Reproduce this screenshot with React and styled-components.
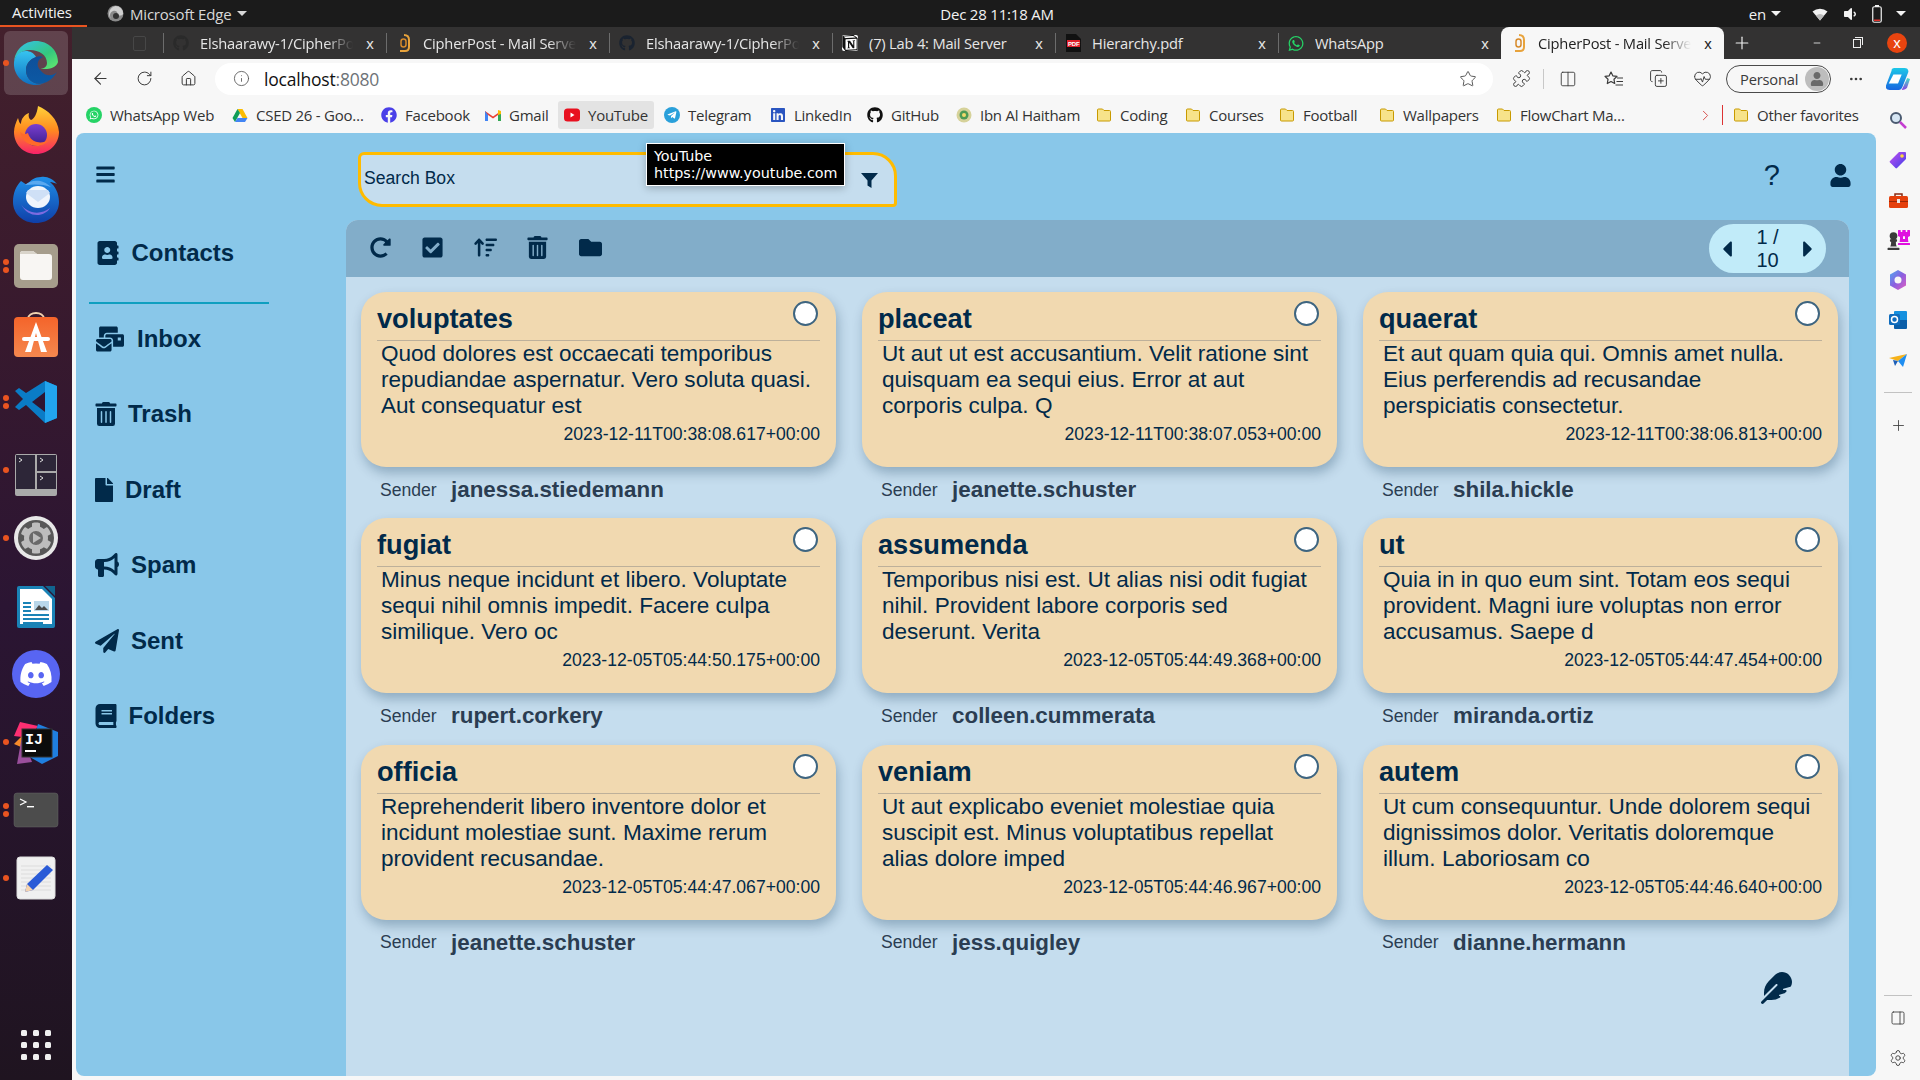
import React from 'react'
import styled, { createGlobalStyle } from 'styled-components'
import {
  FaAddressBook, FaMailBulk, FaTrashAlt, FaFile, FaPaperPlane, FaBook, FaBars, FaUser,
  FaRedoAlt, FaCheckSquare, FaFolder, FaCaretLeft, FaCaretRight, FaVolumeDown,
  FaWhatsapp, FaFacebook, FaTelegramPlane, FaLinkedin, FaGithub, FaChessPawn, FaChessRook, FaCog,
} from 'react-icons/fa'
import { FaBullhorn, FaArrowUpWideShort, FaDiscord, FaFeather } from 'react-icons/fa6'
import { SiNotion } from 'react-icons/si'
import {
  ArrowLeft, RotateCw, Home, Info, Star, Puzzle, Columns2, CopyPlus, HeartPulse, Ellipsis,
  ChevronRight, Plus, Minus, PanelRight, Settings,
} from 'lucide-react'

const NAVY = '#012a4a'
const UI_FONT = '"Open Sans", "Noto Sans", sans-serif'

const GlobalStyle = createGlobalStyle`
  html, body { margin: 0; padding: 0; overflow: hidden; background: #f7f7f7; }
  * { box-sizing: border-box; }
`

const cards = [
  ['voluptates', 'Quod dolores est occaecati temporibus repudiandae aspernatur. Vero soluta quasi. Aut consequatur est', '2023-12-11T00:38:08.617+00:00', 'janessa.stiedemann'],
  ['placeat', 'Ut aut ut est accusantium. Velit ratione sint quisquam ea sequi eius. Error at aut corporis culpa. Q', '2023-12-11T00:38:07.053+00:00', 'jeanette.schuster'],
  ['quaerat', 'Et aut quam quia qui. Omnis amet nulla. Eius perferendis ad recusandae perspiciatis consectetur.', '2023-12-11T00:38:06.813+00:00', 'shila.hickle'],
  ['fugiat', 'Minus neque incidunt et libero. Voluptate sequi nihil omnis impedit. Facere culpa similique. Vero oc', '2023-12-05T05:44:50.175+00:00', 'rupert.corkery'],
  ['assumenda', 'Temporibus nisi est. Ut alias nisi odit fugiat nihil. Provident labore corporis sed deserunt. Verita', '2023-12-05T05:44:49.368+00:00', 'colleen.cummerata'],
  ['ut', 'Quia in in quo eum sint. Totam eos sequi provident. Magni iure voluptas non error accusamus. Saepe d', '2023-12-05T05:44:47.454+00:00', 'miranda.ortiz'],
  ['officia', 'Reprehenderit libero inventore dolor et incidunt molestiae sunt. Maxime rerum provident recusandae.', '2023-12-05T05:44:47.067+00:00', 'jeanette.schuster'],
  ['veniam', 'Ut aut explicabo eveniet molestiae quia suscipit est. Minus voluptatibus repellat alias dolore imped', '2023-12-05T05:44:46.967+00:00', 'jess.quigley'],
  ['autem', 'Ut cum consequuntur. Unde dolorem sequi dignissimos dolor. Veritatis doloremque illum. Laboriosam co', '2023-12-05T05:44:46.640+00:00', 'dianne.hermann'],
]

const Desktop = styled.div`
  position: relative;
  width: 1920px;
  height: 1080px;
  overflow: hidden;
  display: flex;
  flex-direction: column;
  font-family: "Liberation Sans", Arial, sans-serif;
`

/* ---------- gnome top bar ---------- */
const TopBar = styled.div`
  height: 27px;
  flex: none;
  background: #1b1b1b;
  color: #f2f2f2;
  font: 15px ${UI_FONT};
  letter-spacing: -0.2px;
  display: grid;
  grid-template-columns: 1fr auto 1fr;
  align-items: center;
`
const TopLeft = styled.div`
  display: flex;
  align-items: center;
  height: 100%;
`
const Activities = styled.div`
  width: 87px;
  height: 100%;
  padding-left: 12px;
  line-height: 25px;
  border-bottom: 2px solid #e95420;
`
const AppMenu = styled.div`
  display: flex;
  align-items: center;
  gap: 6px;
  margin-left: 20px;
  color: #d8d8d8;
`
const Caret = styled.span`
  width: 0;
  height: 0;
  border-left: 5px solid transparent;
  border-right: 5px solid transparent;
  border-top: 5px solid currentColor;
`
const Clock = styled.div`
  margin-left: 74px;
`
const TopRight = styled.div`
  display: flex;
  align-items: center;
  justify-content: flex-end;
  gap: 5px;
  padding-right: 14px;
`
const StatusIcons = styled.div`
  display: flex;
  align-items: center;
  gap: 14px;
  margin: 0 9px 0 26px;
`

/* ---------- dock ---------- */
const Body = styled.div`
  flex: 1;
  min-height: 0;
  display: flex;
`
const Dock = styled.div`
  width: 72px;
  flex: none;
  background: linear-gradient(180deg, #43202c 0%, #37192e 30%, #2b1533 55%, #1f1420 100%);
  display: flex;
  flex-direction: column;
  align-items: center;
  padding-top: 4px;
`
const DockItem = styled.div`
  position: relative;
  flex: none;
  width: 64px;
  height: ${p => (p.$active ? 64 : 68)}px;
  margin-bottom: ${p => (p.$active ? 1 : 0)}px;
  padding-top: ${p => p.$nudge || 0}px;
  display: flex;
  align-items: center;
  justify-content: center;
  border-radius: 6px;
  background: ${p => (p.$active ? 'rgba(255,255,255,.16)' : 'transparent')};
`
const Dots = styled.div`
  position: absolute;
  left: -1px;
  top: 50%;
  transform: translateY(-50%);
  display: flex;
  flex-direction: column;
  gap: 2px;
`
const Dot = styled.span`
  width: 6px;
  height: 6px;
  border-radius: 50%;
  background: #e95420;
`
const AppGrid = styled.div`
  margin-top: auto;
  margin-bottom: 20px;
  display: grid;
  grid-template-columns: repeat(3, 6px);
  gap: 6px;
`
const AppGridDot = styled.span`
  width: 6px;
  height: 6px;
  border-radius: 1.5px;
  background: #f0f0f0;
`

/* ---------- browser chrome ---------- */
const Browser = styled.div`
  flex: 1;
  min-width: 0;
  display: flex;
  flex-direction: column;
  background: #f7f7f7;
`
const TabStrip = styled.div`
  height: 32px;
  flex: none;
  background: #333232;
  display: flex;
  align-items: stretch;
`
const PinnedStub = styled.div`
  width: 91px;
  display: flex;
  align-items: center;
  justify-content: flex-end;
  padding-right: 17px;
`
const PinnedIcon = styled.span`
  width: 13px;
  height: 15px;
  border: 1.5px solid #474747;
  border-radius: 2px;
`
const Tab = styled.div`
  width: 223px;
  flex: none;
  display: flex;
  align-items: center;
  gap: 11px;
  padding: 0 10px;
  position: relative;
  font: 14.7px ${UI_FONT};
  letter-spacing: -0.2px;
  color: ${p => (p.$active ? '#222' : '#e6e6e6')};
  background: ${p => (p.$active ? '#f7f7f7' : 'transparent')};
  border-radius: ${p => (p.$active ? '8px 8px 0 0' : '0')};
  &::before {
    content: '';
    display: ${p => (p.$active ? 'none' : 'block')};
    position: absolute;
    left: 0;
    top: 6px;
    bottom: 6px;
    width: 1px;
    background: #6c6c6c;
  }
`
const TabIcon = styled.span`
  width: 16px;
  height: 18px;
  flex: none;
  display: flex;
  align-items: center;
  justify-content: center;
`
const NotionBox = styled.span`
  display: flex;
  background: #fff;
  border-radius: 2px;
`
const TabTitle = styled.span`
  flex: 1;
  min-width: 0;
  white-space: nowrap;
  overflow: hidden;
  ${p => p.$fade && 'mask-image: linear-gradient(90deg, #000 82%, transparent 100%);'}
`
const TabClose = styled.span`
  flex: none;
  width: 12px;
  text-align: center;
  font: 15px "Liberation Sans", sans-serif;
`
const NewTab = styled.div`
  width: 36px;
  display: flex;
  align-items: center;
  justify-content: center;
  color: #f0f0f0;
`
const WindowButtons = styled.div`
  flex: 1;
  display: flex;
  align-items: center;
  justify-content: flex-end;
  gap: 26px;
  padding-right: 13px;
  color: #eee;
  & > svg { margin-right: 5px; }
`
const RestoreIcon = styled.span`
  position: relative;
  width: 8px;
  height: 9px;
  border: 1px solid #eee;
  &::after {
    content: '';
    position: absolute;
    left: 1px;
    top: -3px;
    width: 7px;
    height: 7px;
    border-top: 1px solid #eee;
    border-right: 1px solid #eee;
  }
`
const CloseCircle = styled.span`
  width: 20px;
  height: 20px;
  border-radius: 50%;
  background: #e8440f;
  color: #fff;
  font: 15px/19px "Liberation Sans", sans-serif;
  text-align: center;
`
const AddressRow = styled.div`
  height: 39px;
  flex: none;
  display: flex;
  align-items: center;
  padding-left: 6px;
  color: #3a3a3a;
`
const NavButton = styled.div`
  width: ${p => p.$w || 44}px;
  height: 30px;
  flex: none;
  display: flex;
  align-items: center;
  justify-content: center;
`
const UrlPill = styled.div`
  width: 1278px;
  height: 32px;
  margin: 0 6px 0 5px;
  flex: none;
  background: #fff;
  border-radius: 16px;
  display: flex;
  align-items: center;
  padding: 0 16px 0 18px;
  gap: 14px;
  font: 17.5px ${UI_FONT};
  letter-spacing: -0.2px;
`
const UrlText = styled.span`
  flex: 1;
  color: #111;
  & > span { color: #6e7378; }
`
const ToolbarSep = styled.span`
  width: 1px;
  height: 20px;
  background: #c8c8c8;
  flex: none;
`
const ProfilePill = styled.div`
  width: 105px;
  height: 28px;
  margin-left: 2px;
  flex: none;
  border: 1.5px solid #4a4a4a;
  border-radius: 14px;
  display: flex;
  align-items: center;
  justify-content: space-between;
  padding: 0 1px 0 13px;
  font: 14.7px ${UI_FONT};
  letter-spacing: -0.2px;
`
const Avatar = styled.span`
  width: 24px;
  height: 24px;
  border-radius: 50%;
  background: #bdbdbd;
  color: #6a6a6a;
  display: flex;
  align-items: center;
  justify-content: center;
`
const Lower = styled.div`
  flex: 1;
  min-height: 0;
  display: flex;
`
const Column = styled.div`
  flex: 1;
  min-width: 0;
  display: flex;
  flex-direction: column;
`
const BookmarksBar = styled.div`
  height: 35px;
  flex: none;
  display: flex;
  align-items: flex-start;
  padding: 3px 9px 0 8px;
  gap: 4px;
`
const Bookmark = styled.div`
  width: ${p => p.$w}px;
  height: 28px;
  flex: none;
  display: flex;
  align-items: center;
  gap: 8px;
  padding: 0 6px;
  border-radius: 3px;
  font: 15px ${UI_FONT};
  letter-spacing: -0.25px;
  color: #333;
  white-space: nowrap;
  overflow: hidden;
  background: ${p => (p.$hover ? '#e3e3e3' : 'transparent')};
  & > svg { flex: none; }
`
const BarOverflow = styled.div`
  margin-left: auto;
  display: flex;
  align-items: center;
  height: 28px;
  color: #d9534f;
  gap: 8px;
`
const BarRule = styled.span`
  width: 1px;
  height: 20px;
  background: #d33;
`

/* ---------- mail app ---------- */
const Page = styled.main`
  flex: 1;
  min-height: 0;
  margin: 0 0 4px 4px;
  background: #89c7e9;
  border-radius: 8px;
  overflow: hidden;
  display: grid;
  grid-template-columns: 270px 1fr;
  color: ${NAVY};
`
const Sidebar = styled.nav`
  display: flex;
  flex-direction: column;
  padding-top: 41px;
`
const MenuButton = styled.div`
  padding-left: 19px;
  height: 0;
  display: flex;
  align-items: center;
`
const SideItem = styled.a`
  height: 48px;
  margin-bottom: 27.5px;
  display: flex;
  align-items: center;
  padding-left: ${p => p.$left}px;
  gap: ${p => p.$gap}px;
  font-size: 24px;
  font-weight: 700;
  flex: none;
`
const ContactsItem = styled(SideItem)`
  margin: 55px 0 0;
`
const SideRule = styled.div`
  width: 180px;
  height: 2px;
  background: #0f9fc0;
  margin: 25px 0 10.5px 13px;
  flex: none;
`
const Right = styled.div`
  display: flex;
  flex-direction: column;
  min-width: 0;
  padding-right: 27px;
`
const Header = styled.header`
  height: 87px;
  flex: none;
  display: flex;
  align-items: flex-start;
  padding: 19px 0 0 12px;
`
const SearchBox = styled.div`
  width: 539px;
  height: 55px;
  display: flex;
  align-items: center;
  justify-content: space-between;
  padding: 0 16px 2px 3px;
  background: #c5ddee;
  border: 3px solid #ffbb00;
  border-radius: 6px 24px 4px 24px;
  font-size: 17.6px;
`
const FilterIcon = styled.svg`
  width: 17px;
  height: 15px;
  margin-top: 3px;
  fill: currentColor;
`
const HeaderActions = styled.div`
  margin-left: auto;
  display: flex;
  align-items: center;
  gap: 49px;
  height: 46px;
  margin-right: -3px;
`
const HelpMark = styled.span`
  font-size: 29px;
  line-height: 1;
`
const Panel = styled.section`
  flex: 1;
  min-height: 0;
  background: #c5ddee;
  border-radius: 12px 12px 0 0;
  display: flex;
  flex-direction: column;
`
const Toolbar = styled.div`
  height: 57px;
  flex: none;
  background: #82adc9;
  border-radius: 12px 12px 0 0;
  display: flex;
  align-items: center;
  padding: 0 23px 2px 8px;
`
const ToolButton = styled.div`
  width: 52.5px;
  display: flex;
  justify-content: center;
`
const Pager = styled.div`
  margin: 2px 0 0 auto;
  width: 117px;
  height: 49px;
  background: #c1ebf9;
  border-radius: 25px;
  display: flex;
  align-items: center;
  justify-content: space-between;
  padding: 0 5px;
  font-size: 20px;
`
const PagerText = styled.div`
  width: 40px;
  text-align: center;
  line-height: 23px;
`
const CardGrid = styled.div`
  display: grid;
  grid-template-columns: repeat(3, 475px);
  column-gap: 26px;
  padding: 15px 0 0 15px;
`
const Mail = styled.article`
  height: 226.25px;
  display: flex;
  flex-direction: column;
`
const Card = styled.div`
  height: 175px;
  flex: none;
  background: #f1d9b0;
  border-radius: 25px;
  box-shadow: 2px 6px 12px rgba(1, 42, 74, 0.28);
  padding: 8px 16px 0;
  display: flex;
  flex-direction: column;
`
const CardHead = styled.div`
  height: 41px;
  flex: none;
  display: flex;
  justify-content: space-between;
  border-bottom: 1px solid #bdb09a;
`
const CardTitle = styled.div`
  font-size: 27.2px;
  font-weight: 700;
  line-height: 38px;
`
const Radio = styled.span`
  width: 25px;
  height: 25px;
  margin: 1px 2px 0 0;
  border-radius: 50%;
  background: #fff;
  border: 2px solid #3e6580;
`
const CardBody = styled.p`
  margin: 0;
  padding: 0 6px 0 4px;
  font-size: 22.55px;
  line-height: 26px;
  height: 78px;
  overflow: hidden;
`
const CardDate = styled.div`
  margin-top: 3px;
  text-align: right;
  font-size: 17.6px;
  line-height: 24px;
`
const SenderRow = styled.div`
  height: 46px;
  display: flex;
  align-items: center;
  padding: 0 0 0 19px;
  color: #2b3d52;
`
const SenderLabel = styled.span`
  font-size: 17.6px;
  width: 71px;
`
const SenderName = styled.span`
  font-size: 22.4px;
  font-weight: 700;
`
const ComposeRow = styled.div`
  display: flex;
  justify-content: flex-end;
  padding: 1px 57px 0 0;
`
const Tooltip = styled.div`
  position: absolute;
  left: 646px;
  top: 143px;
  width: 199px;
  height: 43px;
  background: #000;
  color: #fff;
  border: 1px solid #fff;
  padding: 4px 0 0 7px;
  font: 14.3px/17px "DejaVu Sans", sans-serif;
  box-shadow: 0 2px 8px rgba(0,0,0,.25);
  white-space: nowrap;
`

/* ---------- right rail ---------- */
const Rail = styled.aside`
  width: 44px;
  flex: none;
  display: flex;
  flex-direction: column;
  align-items: center;
  color: #3d3d3d;
  padding: 2px 0 2px;
`
const RailIcon = styled.div`
  height: 40px;
  flex: none;
  display: flex;
  align-items: center;
  justify-content: center;
`
const RookWrap = styled.span`
  display: flex;
  margin: -6px 0 0 -7px;
`
const RailRule = styled.div`
  width: 28px;
  height: 1px;
  background: #c2c2c2;
  margin: ${p => p.$m || '12px 0'};
  flex: none;
`

/* ---------- drawn logos ---------- */
const Grad = ({ id, stops, x2 = 0, y2 = 1 }) => (
  <linearGradient id={id} x1="0" y1="0" x2={x2} y2={y2}>
    {stops.map(([o, c]) => <stop key={o} offset={o} stopColor={c} />)}
  </linearGradient>
)

const EdgeLogo = ({ size = 48 }) => (
  <svg width={size} height={size} viewBox="0 0 48 48">
    <defs>
      <Grad id="e1" stops={[[0, '#36c4f0'], [1, '#0f6fc0']]} />
      <Grad id="e2" stops={[[0, '#35c1f1'], [.6, '#34c87e'], [1, '#66eb6e']]} x2={1} />
      <Grad id="e3" stops={[[0, '#0d4f9a'], [1, '#0c59a4']]} />
    </defs>
    <path d="M24 2C12 2 3 11 2 23c1-7 8-12 16-12 9 0 17 5 17 13 0 2-1 4-3 5-2 1-5 1-7 0 6 2 19 2 21-6C46 11 36 2 24 2z" fill="url(#e2)" />
    <path d="M2 23C1 36 11 46 24 46c3 0 6-1 8-2-9 3-18-3-18-13 0-6 4-11 10-13-2-4-6-6-10-6-7 0-11 5-12 11z" fill="url(#e1)" />
    <path d="M24 18c-6 2-10 7-10 13 0 10 9 16 18 13 6-2 10-6 13-11-5 5-12 4-16-1-3-3-4-6-3-9 1-3 3-4 5-5-2-1-5-1-7 0z" fill="url(#e3)" />
  </svg>
)
const FirefoxLogo = () => (
  <svg width="48" height="50" viewBox="0 0 48 50">
    <defs>
      <Grad id="f1" stops={[[0, '#ffd23a'], [.5, '#ff8a1f'], [1, '#f7226a']]} />
      <Grad id="f2" stops={[[0, '#7b3fd0'], [1, '#3a1f8c']]} />
    </defs>
    <path d="M24 49C11 49 2 39 2 27c0-5 2-10 4-14 1 3 1 5 3 6 0-5 3-9 8-11-1 3 0 6 2 7 3-1 6-6 7-14 10 4 20 13 21 26 0 12-10 22-23 22z" fill="url(#f1)" />
    <circle cx="24" cy="30" r="11" fill="url(#f2)" />
    <path d="M8 27c2 9 10 15 19 14 4-1 8-3 10-6-4 2-8 3-12 2-5-1-8-5-9-9-3 2-6 1-8-1z" fill="#ff6a2a" />
  </svg>
)
const ThunderbirdLogo = () => (
  <svg width="48" height="48" viewBox="0 0 48 48">
    <defs><Grad id="t1" stops={[[0, '#1f8fe8'], [1, '#0f3fa8']]} /></defs>
    <path d="M9 5C4 10 1 17 1 26c0 12 10 21 23 21s23-9 23-21c0-9-4-16-9-20 2 0 5 1 7 2-4-5-10-8-16-7-6 0-11 3-14 8-2-1-4-3-6-4z" fill="url(#t1)" />
    <path d="M13 9c5-5 17-7 26 2-7-3-18-3-26-2z" fill="#5aa9f0" />
    <ellipse cx="26" cy="21" rx="12" ry="11" fill="#f0f5fc" />
    <path d="M14 17l12 9 12-9-2-3H16z" fill="#cfe0f6" />
    <path d="M9 28c5 9 19 12 29 4-5 9-22 11-29-4z" fill="#7d6be0" />
  </svg>
)
const FilesLogo = () => (
  <svg width="46" height="46" viewBox="0 0 46 46">
    <rect x="1" y="1" width="44" height="44" rx="5" fill="#a69d8c" />
    <path d="M7 11a3 3 0 013-3h10l4 3h12a3 3 0 013 3v20a3 3 0 01-3 3H10a3 3 0 01-3-3z" fill="#f8f6f3" />
    <path d="M7 11a3 3 0 013-3h10l4 3z" fill="#d9d4ca" />
  </svg>
)
const SoftwareLogo = () => (
  <svg width="46" height="48" viewBox="0 0 46 48">
    <defs><Grad id="s1" stops={[[0, '#f4642a'], [1, '#f5884f']]} /></defs>
    <path d="M15 9c0-8 16-8 16 0" fill="none" stroke="#f2d3b0" strokeWidth="2" />
    <rect x="1" y="7" width="44" height="40" rx="4" fill="url(#s1)" />
    <path d="M23 12l-11 30h6l5-19 5 19h6z" fill="#fff" />
    <rect x="9" y="27" width="28" height="4" rx="2" fill="#fff" />
  </svg>
)
const VsCodeLogo = () => (
  <svg width="44" height="44" viewBox="0 0 44 44">
    <path d="M31 1l12 5v32l-12 5-19-18-7 5-4-3 8-8-8-8 4-3 7 5z" fill="#0a7cc6" />
    <path d="M31 1l12 5v32l-12 5z" fill="#22a5ee" />
    <path d="M31 12v20L18 22z" fill="#2f1632" />
  </svg>
)
const TilixLogo = () => (
  <svg width="44" height="44" viewBox="0 0 44 44">
    <rect x="1" y="1" width="42" height="42" rx="2" fill="#aaa" />
    <rect x="2" y="2" width="19" height="34" fill="#2d2638" />
    <rect x="23" y="2" width="19" height="16" fill="#2d2638" />
    <rect x="23" y="20" width="19" height="16" fill="#2d2638" />
    <path d="M5 5l3 2-3 2M26 5l3 2-3 2M26 23l3 2-3 2" fill="none" stroke="#ddd" />
  </svg>
)
const GearLogo = () => (
  <svg width="46" height="46" viewBox="0 0 46 46">
    <circle cx="23" cy="23" r="22" fill="#e8e8e8" />
    <circle cx="23" cy="23" r="18" fill="#585858" />
    <g transform="translate(7 7)" color="#bdbdbd"><FaCog size={32} /></g>
    <circle cx="23" cy="23" r="7" fill="#6a6a6a" />
    <path d="M20 18l8 5-8 5z" fill="#bdbdbd" />
  </svg>
)
const WriterLogo = () => (
  <svg width="40" height="44" viewBox="0 0 40 44">
    <path d="M1 3a2 2 0 012-2h24l12 12v28a2 2 0 01-2 2H3a2 2 0 01-2-2z" fill="#1a83b6" />
    <path d="M4 4h22l10 10v25H4z" fill="#fff" />
    <path d="M29 1l10 0v10z" fill="#11648f" />
    <path d="M7 17h8v2H7zM7 21h8v2H7zM7 25h8v2H7zM7 29h26v2H7zM7 33h26v2H7zM7 37h20v2H7z" fill="#1a83b6" />
    <rect x="18" y="16" width="15" height="10" fill="#b9d7ea" />
    <path d="M19 25l4-5 3 3 2-2 4 4z" fill="#4a4a4a" />
  </svg>
)
const DiscordLogo = () => (
  <svg width="48" height="48" viewBox="0 0 48 48">
    <circle cx="24" cy="24" r="24" fill="#5865f2" />
    <g transform="translate(7 4)" color="#fff"><FaDiscord size={34} y={3} /></g>
  </svg>
)
const IdeaLogo = () => (
  <svg width="48" height="46" viewBox="0 0 48 46">
    <path d="M8 2l18 4-8 12-16-2z" fill="#fe2f72" />
    <path d="M2 24l8-8 6 14z" fill="#f78a2a" />
    <path d="M10 16l10 26-15 2z" fill="#9a4f9c" />
    <path d="M26 4l20 8v24l-16 8-14-8z" fill="#1f7fe0" />
    <rect x="10" y="9" width="30" height="28" fill="#0c0c0c" stroke="#333" />
    <text x="13" y="24" fill="#fff" fontFamily="Liberation Mono, monospace" fontWeight="700" fontSize="15">IJ</text>
    <rect x="13" y="30" width="11" height="2" fill="#fff" />
  </svg>
)
const TerminalLogo = () => (
  <svg width="46" height="36" viewBox="0 0 46 36">
    <rect x="1" y="1" width="44" height="34" rx="3" fill="#4c4c4c" stroke="#666" strokeWidth=".5" />
    <path d="M7 7l6 3-6 3" fill="none" stroke="#fff" strokeWidth="1.2" />
    <rect x="14" y="14" width="7" height="1.4" fill="#fff" />
  </svg>
)
const EditorLogo = () => (
  <svg width="40" height="44" viewBox="0 0 40 44">
    <rect x="1" y="1" width="38" height="42" rx="3" fill="#f0f0f0" stroke="#ddd" />
    <path d="M5 10h30M5 14h30M5 18h30M5 22h30M5 26h30M5 30h30M5 34h30" stroke="#d0d0d0" strokeWidth=".6" />
    <path d="M11 28l20-19 6 5-20 20-8 2z" fill="#2a5bd7" />
    <path d="M9 36l2-8 6 6z" fill="#f4d3b0" />
  </svg>
)
const Folder = () => (
  <svg width="16" height="16" viewBox="0 0 16 16">
    <path d="M1.500 3a1 1 0 011-1h4l1.500 1.500h5.500a1 1 0 011 1V13a1 1 0 01-1 1h-11a1 1 0 01-1-1z" fill="#f7e38a" stroke="#c89a00" />
  </svg>
)
const DriveIcon = () => (
  <svg width="16" height="15" viewBox="0 0 16 15">
    <path d="M5.500 1h5l5 9h-5z" fill="#fbbc04" />
    <path d="M5.500 1L.5 10l2.500 4 5-9z" fill="#0f9d58" />
    <path d="M3 14h10l2.500-4H5.500z" fill="#4285f4" />
  </svg>
)
const GmailIcon = () => (
  <svg width="16" height="13" viewBox="0 0 16 13">
    <path d="M0 2l8 5.500L16 2v10h-3V6L8 9.500 3 6v6H0z" fill="#ea4335" />
    <path d="M0 2v10h3V6z" fill="#4285f4" />
    <path d="M16 2v10h-3V6z" fill="#34a853" />
    <path d="M13 1l3 1v3l-3 1z" fill="#fbbc04" />
  </svg>
)
const YouTubeIcon = () => (
  <svg width="16" height="16" viewBox="0 0 16 16">
    <rect x="0" y="1.500" width="16" height="13" rx="3.500" fill="#e8101f" />
    <path d="M6.500 5.500l4 2.500-4 2.500z" fill="#fff" />
  </svg>
)
const RoundBrand = ({ bg, children }) => (
  <svg width="16" height="16" viewBox="0 0 16 16">
    <circle cx="8" cy="8" r="8" fill={bg} />
    <g color="#fff" transform="translate(3 3)">{children}</g>
  </svg>
)
const EmblemIcon = () => (
  <svg width="16" height="16" viewBox="0 0 16 16">
    <circle cx="8" cy="8" r="7.500" fill="#d6d29a" />
    <circle cx="8" cy="8" r="4.500" fill="#4e9a54" />
    <circle cx="8" cy="8" r="2" fill="#f2d96b" />
  </svg>
)
const PdfIcon = () => (
  <svg width="15" height="18" viewBox="0 0 15 18">
    <path d="M0 0h10l5 5v13H0z" fill="#111" />
    <rect x="1" y="6" width="13" height="7" fill="#e0202a" />
    <text x="2" y="12" fontSize="6" fontWeight="700" fill="#fff" fontFamily="Liberation Sans">PDF</text>
  </svg>
)
const PostFavicon = () => (
  <svg width="12" height="18" viewBox="0 0 12 18">
    <path d="M6 1c3 0 5 2 5 5v7c0 2-1 4-4 4H2" fill="none" stroke="#e8a33c" strokeWidth="2" />
    <rect x="3" y="5" width="5" height="8" rx="2.500" fill="none" stroke="#d78a2a" strokeWidth="1.500" />
  </svg>
)
const CopilotIcon = () => (
  <svg width="24" height="28" viewBox="0 0 26 28">
    <defs>
      <Grad id="c1" stops={[[0, '#1dc8e8'], [1, '#1767e0']]} />
      <Grad id="c2" stops={[[0, '#44e0c8'], [1, '#8a3fe0']]} />
    </defs>
    <path d="M9 2h11c3 0 5 2 4 5l-6 15c-1 3-3 4-6 4H4c-3 0-5-2-4-5L6 5c0-2 1-3 3-3z" fill="url(#c1)" />
    <path d="M8 9h9l-4 10H3z" fill="#fff" />
    <path d="M17 26l6-13 3 1-3 9c-1 2-3 3-6 3z" fill="url(#c2)" />
  </svg>
)
const FavoritesIcon = () => (
  <svg width="20" height="20" viewBox="0 0 20 20" fill="none" stroke="currentColor" strokeWidth="1.200">
    <path d="M7 3l1.800 3.800 4.200.6-3 2.900.7 4.200L7 12.500l-3.700 2 .7-4.200-3-2.900 4.200-.6z" strokeLinejoin="round" />
    <path d="M13 9h6M12.500 12.500H19M11.500 16H19" />
  </svg>
)
const WifiIcon = () => (
  <svg width="16" height="14" viewBox="0 0 16 14">
    <path d="M8 13.500L.5 4.500a11.500 11.500 0 0115 0z" fill="#f2f2f2" />
    <path d="M8 13.500L4 8.600a6 6 0 018 0z" fill="#bbb" />
  </svg>
)
const BatteryIcon = () => (
  <svg width="10" height="18" viewBox="0 0 10 18">
    <rect x=".75" y="1.750" width="8.500" height="15.500" rx="1.500" fill="none" stroke="#f2f2f2" strokeWidth="1.200" />
    <rect x="3" y="0" width="4" height="2" fill="#f2f2f2" />
    <rect x="2" y="14.500" width="6" height="1.500" fill="#e0302a" />
  </svg>
)
const TagIcon = () => (
  <svg width="18" height="18" viewBox="0 0 18 18">
    <defs><Grad id="r1" stops={[[0, '#c44ff0'], [1, '#3f3fe8']]} x2={1} /></defs>
    <path d="M10 1h6a1 1 0 011 1v6L8 17a1 1 0 01-1.500 0L1 11.500A1 1 0 011 10z" fill="url(#r1)" />
    <circle cx="13" cy="5" r="1.800" fill="#ffd93b" />
  </svg>
)
const ToolboxIcon = () => (
  <svg width="19" height="15" viewBox="0 0 19 15">
    <path d="M6 3V1h7v2" fill="none" stroke="#8a2a10" strokeWidth="1.500" />
    <rect x="0" y="3" width="19" height="12" rx="1.500" fill="#e5400c" />
    <rect x="0" y="8" width="19" height="1" fill="#9b2706" />
    <rect x="8" y="6" width="3" height="4" fill="#e8e8e8" />
  </svg>
)
const M365Icon = () => (
  <svg width="18" height="20" viewBox="0 0 18 20">
    <defs><Grad id="m1" stops={[[0, '#4fa8f0'], [.5, '#8a5fe0'], [1, '#e05fc0']]} x2={1} /></defs>
    <path d="M9 0l8 4.500v11L9 20l-8-4.500v-11z" fill="url(#m1)" />
    <circle cx="9" cy="10" r="3.500" fill="#f7f7f7" />
  </svg>
)
const OutlookIcon = () => (
  <svg width="18" height="18" viewBox="0 0 18 18">
    <rect x="5" y="0" width="13" height="17" rx="1" fill="#1490df" />
    <path d="M5 9h13v8a1 1 0 01-1 1H6a1 1 0 01-1-1z" fill="#0a5ea8" />
    <rect x="0" y="3" width="11" height="11" rx="1.500" fill="#0f6cbd" />
    <circle cx="5.500" cy="8.500" r="3" fill="none" stroke="#fff" strokeWidth="1.500" />
  </svg>
)
const SendIcon = () => (
  <svg width="18" height="13" viewBox="0 0 18 13">
    <path d="M0 4l18-4-9 7z" fill="#f6b21a" />
    <path d="M18 0l-4 13-5-6z" fill="#1f8ef1" />
    <path d="M4 6l5 1-3 5z" fill="#1c5fb8" />
  </svg>
)
const SearchGlass = () => (
  <svg width="18" height="18" viewBox="0 0 18 18">
    <circle cx="7" cy="7" r="5" fill="#d6e6f4" stroke="#4a5a70" strokeWidth="2" />
    <path d="M11 11l6 6" stroke="#c43fd0" strokeWidth="2.500" />
  </svg>
)
const EdgeLogoGrey = () => (
  <svg width="17" height="17" viewBox="0 0 17 17">
    <circle cx="8.500" cy="8.500" r="8" fill="#8a8a8a" />
    <path d="M8.500 1a7.500 7.500 0 017.500 8c-1 2-5 2-6 0 1-2-1-4-4-3-3 1-4 5-2 8A8 8 0 018.500 1z" fill="#d0d0d0" />
    <circle cx="9" cy="11" r="3" fill="#333" />
  </svg>
)

const dock = [
  { active: true, dots: 1, el: <EdgeLogo /> },
  { el: <FirefoxLogo /> },
  { nudge: 3, el: <ThunderbirdLogo /> },
  { dots: 2, el: <FilesLogo /> },
  { el: <SoftwareLogo /> },
  { dots: 2, el: <VsCodeLogo /> },
  { nudge: 9, dots: 1, el: <TilixLogo /> },
  { dots: 1, el: <GearLogo /> },
  { nudge: 2, el: <WriterLogo /> },
  { el: <DiscordLogo /> },
  { nudge: 2, dots: 1, el: <IdeaLogo /> },
  { dots: 2, el: <TerminalLogo /> },
  { dots: 1, el: <EditorLogo /> },
]

const tabs = [
  { title: 'Elshaarawy-1/CipherPost', icon: <FaGithub size={16} color="#2a2a2a" />, fade: true },
  { title: 'CipherPost - Mail Server', icon: <PostFavicon />, fade: true },
  { title: 'Elshaarawy-1/CipherPost', icon: <FaGithub size={16} color="#1a2330" />, fade: true },
  { title: '(7) Lab 4: Mail Server', icon: <NotionBox><SiNotion size={16} color="#111" /></NotionBox> },
  { title: 'Hierarchy.pdf', icon: <PdfIcon /> },
  { title: 'WhatsApp', icon: <FaWhatsapp size={17} color="#25d366" /> },
  { title: 'CipherPost - Mail Server', icon: <PostFavicon />, active: true, fade: true },
]

const bookmarks = [
  { w: 142, label: 'WhatsApp Web', icon: <RoundBrand bg="#25d366"><FaWhatsapp size={10} /></RoundBrand> },
  { w: 145, label: 'CSED 26 - Goo…', icon: <DriveIcon /> },
  { w: 100, label: 'Facebook', icon: <FaFacebook size={16} color="#4a3fe8" /> },
  { w: 75, label: 'Gmail', icon: <GmailIcon /> },
  { w: 96, label: 'YouTube', icon: <YouTubeIcon />, hover: true },
  { w: 102, label: 'Telegram', icon: <RoundBrand bg="#2aa0da"><FaTelegramPlane size={10} /></RoundBrand> },
  { w: 93, label: 'LinkedIn', icon: <FaLinkedin size={16} color="#2a55c0" /> },
  { w: 85, label: 'GitHub', icon: <FaGithub size={16} color="#111" /> },
  { w: 136, label: 'Ibn Al Haitham', icon: <EmblemIcon /> },
  { w: 85, label: 'Coding', icon: <Folder /> },
  { w: 90, label: 'Courses', icon: <Folder /> },
  { w: 96, label: 'Football', icon: <Folder /> },
  { w: 113, label: 'Wallpapers', icon: <Folder /> },
  { w: 144, label: 'FlowChart Ma…', icon: <Folder /> },
]

const navItems = [
  { label: 'Inbox', icon: <FaMailBulk size={28} />, gap: 13, left: 20 },
  { label: 'Trash', icon: <FaTrashAlt size={24} />, gap: 10.5, left: 17.5 },
  { label: 'Draft', icon: <FaFile size={24} />, gap: 9, left: 16 },
  { label: 'Spam', icon: <FaBullhorn size={24} />, gap: 12, left: 19 },
  { label: 'Sent', icon: <FaPaperPlane size={24} />, gap: 12, left: 19 },
  { label: 'Folders', icon: <FaBook size={24} />, gap: 11, left: 17.5 },
]

const toolIcons = [
  <FaRedoAlt size={21} />, <FaCheckSquare size={23} />, <FaArrowUpWideShort size={23} />, <FaTrashAlt size={23} />, <FaFolder size={23} />,
]

export default function App() {
  return (
    <Desktop>
      <GlobalStyle />
      <TopBar>
        <TopLeft>
          <Activities>Activities</Activities>
          <AppMenu>
            <EdgeLogoGrey />
            Microsoft Edge
            <Caret />
          </AppMenu>
        </TopLeft>
        <Clock>Dec 28 11:18 AM</Clock>
        <TopRight>
          en <Caret />
          <StatusIcons>
            <WifiIcon />
            <FaVolumeDown size={16} />
            <BatteryIcon />
          </StatusIcons>
          <Caret />
        </TopRight>
      </TopBar>
      <Body>
        <Dock>
          {dock.map((d, i) => (
            <DockItem key={i} $active={d.active} $nudge={d.nudge}>
              {d.dots && <Dots>{Array.from({ length: d.dots }).map((_, j) => <Dot key={j} />)}</Dots>}
              {d.el}
            </DockItem>
          ))}
          <AppGrid>{Array.from({ length: 9 }).map((_, i) => <AppGridDot key={i} />)}</AppGrid>
        </Dock>
        <Browser>
          <TabStrip>
            <PinnedStub><PinnedIcon /></PinnedStub>
            {tabs.map((t, i) => (
              <Tab key={i} $active={t.active}>
                <TabIcon>{t.icon}</TabIcon>
                <TabTitle $fade={t.fade}>{t.title}</TabTitle>
                <TabClose>x</TabClose>
              </Tab>
            ))}
            <NewTab><Plus size={20} strokeWidth={1.4} /></NewTab>
            <WindowButtons>
              <Minus size={10} />
              <RestoreIcon />
              <CloseCircle>x</CloseCircle>
            </WindowButtons>
          </TabStrip>
          <AddressRow>
            <NavButton><ArrowLeft size={19} strokeWidth={1.4} /></NavButton>
            <NavButton><RotateCw size={17} strokeWidth={1.4} /></NavButton>
            <NavButton><Home size={17} strokeWidth={1.4} /></NavButton>
            <UrlPill>
              <Info size={17} strokeWidth={1.2} color="#555" />
              <UrlText>localhost<span>:8080</span></UrlText>
              <Star size={18} strokeWidth={1.3} color="#555" />
            </UrlPill>
            <NavButton><Puzzle size={19} strokeWidth={1.2} /></NavButton>
            <ToolbarSep />
            <NavButton $w={47}><Columns2 size={18} strokeWidth={1.2} /></NavButton>
            <NavButton $w={45}><FavoritesIcon /></NavButton>
            <NavButton><CopyPlus size={19} strokeWidth={1.2} /></NavButton>
            <NavButton><HeartPulse size={19} strokeWidth={1.2} /></NavButton>
            <ProfilePill>Personal<Avatar><FaUser size={14} /></Avatar></ProfilePill>
            <NavButton $w={49}><Ellipsis size={16} /></NavButton>
            <NavButton $w={36}><CopilotIcon /></NavButton>
          </AddressRow>
          <Lower>
            <Column>
              <BookmarksBar>
                {bookmarks.map(b => (
                  <Bookmark key={b.label} $w={b.w} $hover={b.hover}>{b.icon}{b.label}</Bookmark>
                ))}
                <BarOverflow>
                  <ChevronRight size={17} strokeWidth={1.4} />
                  <BarRule />
                </BarOverflow>
                <Bookmark $w={140}><Folder />Other favorites</Bookmark>
              </BookmarksBar>
              <Page>
                <Sidebar>
                  <MenuButton><FaBars size={21} /></MenuButton>
                  <ContactsItem $left={19.5} $gap={12}><FaAddressBook size={24} />Contacts</ContactsItem>
                  <SideRule />
                  {navItems.map(n => (
                    <SideItem key={n.label} $gap={n.gap} $left={n.left}>{n.icon}{n.label}</SideItem>
                  ))}
                </Sidebar>
                <Right>
                  <Header>
                    <SearchBox>
                      Search Box
                      <FilterIcon viewBox="0 0 17 15"><path d="M0 0h17L10.500 7.500V15L6.500 12.500V7.500z" /></FilterIcon>
                    </SearchBox>
                    <HeaderActions>
                      <HelpMark>?</HelpMark>
                      <FaUser size={23} />
                    </HeaderActions>
                  </Header>
                  <Panel>
                    <Toolbar>
                      {toolIcons.map((ic, i) => <ToolButton key={i}>{ic}</ToolButton>)}
                      <Pager>
                        <FaCaretLeft size={26} />
                        <PagerText>1 / 10</PagerText>
                        <FaCaretRight size={26} />
                      </Pager>
                    </Toolbar>
                    <CardGrid>
                      {cards.map(([title, body, date, sender], i) => (
                        <Mail key={i}>
                          <Card>
                            <CardHead>
                              <CardTitle>{title}</CardTitle>
                              <Radio />
                            </CardHead>
                            <CardBody>{body}</CardBody>
                            <CardDate>{date}</CardDate>
                          </Card>
                          <SenderRow>
                            <SenderLabel>Sender</SenderLabel>
                            <SenderName>{sender}</SenderName>
                          </SenderRow>
                        </Mail>
                      ))}
                    </CardGrid>
                    <ComposeRow><FaFeather size={32} /></ComposeRow>
                  </Panel>
                </Right>
              </Page>
            </Column>
            <Rail>
              <RailIcon><SearchGlass /></RailIcon>
              <RailIcon><TagIcon /></RailIcon>
              <RailIcon><ToolboxIcon /></RailIcon>
              <RailIcon>
                <FaChessPawn size={19} color="#3a3a3a" />
                <RookWrap><FaChessRook size={16} color="#e010e0" /></RookWrap>
              </RailIcon>
              <RailIcon><M365Icon /></RailIcon>
              <RailIcon><OutlookIcon /></RailIcon>
              <RailIcon><SendIcon /></RailIcon>
              <RailRule />
              <RailIcon><Plus size={17} strokeWidth={1.2} /></RailIcon>
              <RailRule $m="auto 0 2px" />
              <RailIcon><PanelRight size={16} strokeWidth={1.3} /></RailIcon>
              <RailIcon><Settings size={18} strokeWidth={1.2} /></RailIcon>
            </Rail>
          </Lower>
        </Browser>
      </Body>
      <Tooltip>YouTube<br />https://www.youtube.com</Tooltip>
    </Desktop>
  )
}
